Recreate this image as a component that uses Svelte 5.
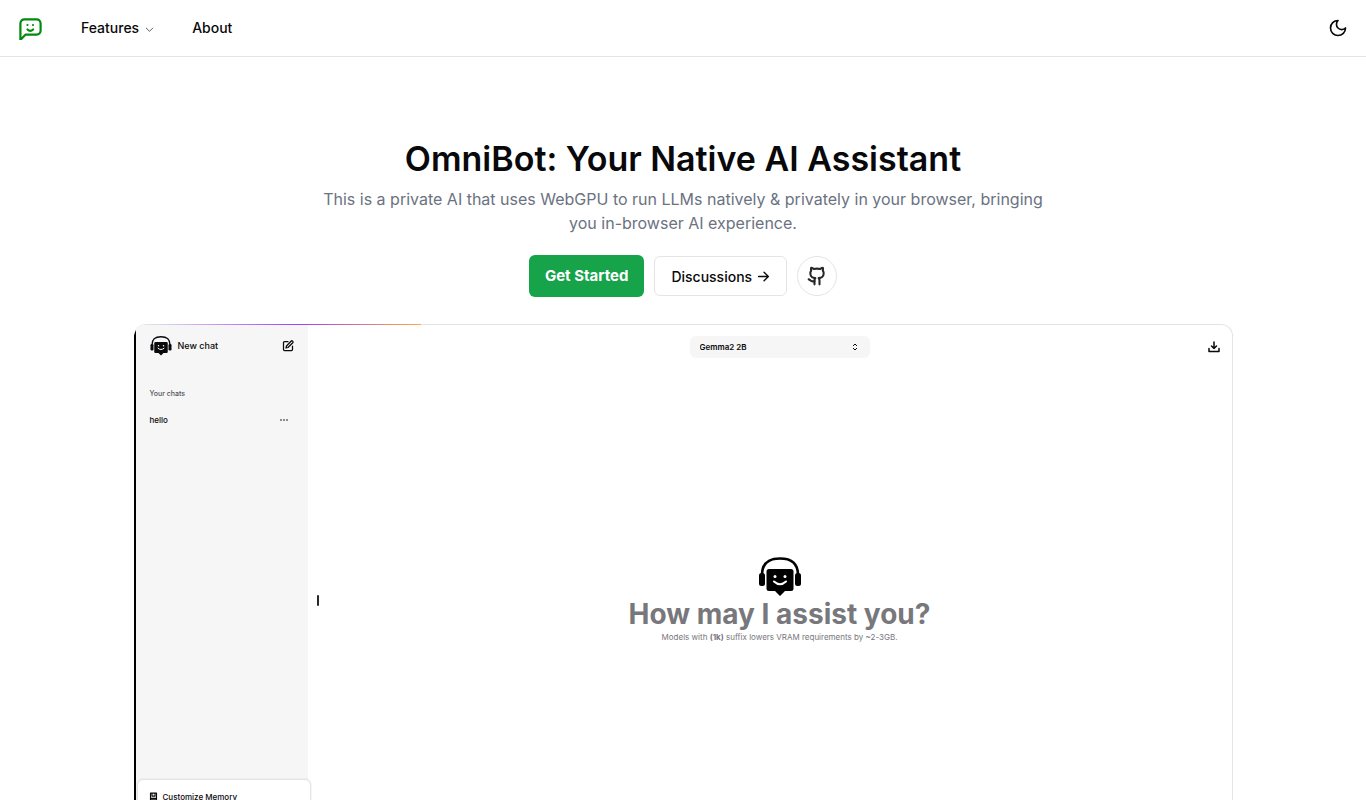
<script>
	let model = $state('Gemma2 2B');
	const models = ['Gemma2 2B', 'Llama 3.2 3B', 'Phi 3.5 Mini'];
	const chats = ['hello'];
</script>

{#snippet robot()}
	<svg class="robot" viewBox="0 0 44 40" aria-hidden="true">
		<path d="M4 18C4 6 11 1.500 22 1.500S40 6 40 18" fill="none" stroke="currentColor" stroke-width="2.600" />
		<rect x="1" y="16" width="6" height="13" rx="2.500" fill="currentColor" />
		<rect x="37" y="16" width="6" height="13" rx="2.500" fill="currentColor" />
		<path
			d="M11 12h22a2.500 2.500 0 0 1 2.500 2.500v17a2.500 2.500 0 0 1-2.500 2.500h-6l-5 5-5-5h-6a2.500 2.500 0 0 1-2.500-2.500v-17a2.500 2.500 0 0 1 2.500-2.500z"
			fill="currentColor"
		/>
		<circle cx="17" cy="19.500" r="1.500" fill="white" />
		<circle cx="27" cy="19.500" r="1.500" fill="white" />
		<path d="M16 24.500q6 5.500 12 0" fill="none" stroke="white" stroke-width="2" stroke-linecap="round" />
	</svg>
{/snippet}

<header>
	<a class="logo" href="/" aria-label="OmniBot home">
		<svg viewBox="0 -2 24 24">
			<path d="M2.400 21.900V5.400a4 4 0 0 1 4-4h12.200a4 4 0 0 1 4 4v7.200a4 4 0 0 1-4 4H7.600z" />
			<path d="M9.500 11.500q2.800 2.600 5.600 0M9.500 7h.01M15 7h.01" />
		</svg>
	</a>
	<nav>
		<button class="nav-item">
			Features
			<svg class="chevron" viewBox="0 0 24 24"><path d="m5 9 7 7 7-7" /></svg>
		</button>
		<a class="nav-item" href="/about">About</a>
	</nav>
	<button class="theme" aria-label="Toggle theme">
		<svg viewBox="0 0 24 24"><path d="M12 3a6 6 0 0 0 9 9 9 9 0 1 1-9-9Z" /></svg>
	</button>
</header>

<main>
	<section class="hero">
		<h1>OmniBot: Your Native AI Assistant</h1>
		<p>
			This is a private AI that uses WebGPU to run LLMs natively & privately in your browser, bringing
			you in-browser AI experience.
		</p>
		<div class="actions">
			<a class="start" href="/chat">Get Started</a>
			<a class="discuss" href="/discussions">
				Discussions
				<svg viewBox="0 0 24 24"><path d="M3 12h18M13 4l8 8-8 8" /></svg>
			</a>
			<a class="github" href="/github" aria-label="GitHub">
				<svg viewBox="0 0 24 24">
					<path d="M15 22v-4a4.800 4.800 0 0 0-1-3.500c3 0 6-2 6-5.500.08-1.250-.27-2.480-1-3.500.28-1.150.28-2.350 0-3.500 0 0-1 0-3 1.500-2.640-.5-5.360-.5-8 0C6 2 5 2 5 2c-.3 1.150-.3 2.350 0 3.500A5.400 5.400 0 0 0 4 9c0 3.500 3 5.500 6 5.500-.39.49-.68 1.050-.85 1.650-.17.6-.22 1.230-.15 1.850v4" />
					<path d="M9 18c-4.510 2-5-2-7-2" />
				</svg>
			</a>
		</div>
	</section>

	<section class="preview">
		<aside>
			<div class="new-chat">
				{@render robot()}
				<span>New chat</span>
				<button aria-label="New chat">
					<svg viewBox="0 0 24 24"><path d="M12 3H5a2 2 0 0 0-2 2v14a2 2 0 0 0 2 2h14a2 2 0 0 0 2-2v-7M18 2.500a2.120 2.120 0 0 1 3.500 3L12 15l-4 1 1-4Z" /></svg>
				</button>
			</div>
			<h2>Your chats</h2>
			<ul>
				{#each chats as chat}
					<li>
						{chat}
						<button aria-label="Chat options">
							<svg class="dots" viewBox="0 0 24 24"><path d="M3 12h.01M12 12h.01M21 12h.01" /></svg>
						</button>
					</li>
				{/each}
			</ul>
			<div class="memory">
				<svg viewBox="0 0 24 24"><path d="M4 3h16v18H4zM8 3v8h8V3M4 17h16" /></svg>
				Customize Memory
			</div>
		</aside>
		<div class="handle"></div>
		<div class="chat">
			<div class="topbar">
				<label class="model">
					<select bind:value={model} aria-label="Model">
						{#each models as name}
							<option>{name}</option>
						{/each}
					</select>
					<svg viewBox="0 0 24 24"><path d="m7 8 5-5 5 5M7 16l5 5 5-5" /></svg>
				</label>
				<button aria-label="Download chat">
					<svg viewBox="0 0 24 24"><path d="M12 2v13M7 10l5 5 5-5M2 15v6h20v-6" /></svg>
				</button>
			</div>
			<div class="welcome">
				{@render robot()}
				<strong>How may I assist you?</strong>
				<small>Models with <b>(1k)</b> suffix lowers VRAM requirements by ~2-3GB.</small>
			</div>
		</div>
		<div class="beam"></div>
	</section>
</main>

<style>
	:global(body) {
		background: white;
		color: #09090b;
		font-family: Inter, 'Liberation Sans', sans-serif;
		font-size: 14px;
	}
	a {
		color: inherit;
		text-decoration: none;
	}
	button {
		display: flex;
		align-items: center;
		padding: 0;
		border: 0;
		background: none;
		color: inherit;
		font: inherit;
		cursor: pointer;
	}
	svg {
		display: block;
		flex: none;
		fill: none;
		stroke: currentColor;
		stroke-width: 2;
		stroke-linecap: round;
		stroke-linejoin: round;
	}
	.robot {
		stroke: none;
	}
	header {
		display: flex;
		align-items: center;
		height: 56px;
		padding: 0 18px;
		border-bottom: 1px solid #e4e4e7;
	}
	.logo {
		color: #008a0e;
	}
	.logo svg {
		width: 24px;
		height: 24px;
		stroke-width: 2.2;
	}
	nav {
		display: flex;
		gap: 5px;
		margin-left: 23px;
	}
	.nav-item {
		display: flex;
		align-items: center;
		gap: 5px;
		height: 36px;
		padding: 0 16px;
		font-weight: 500;
		line-height: 20px;
	}
	.nav-item .chevron {
		width: 11px;
		height: 11px;
		margin-top: 2px;
		color: #52525b;
	}
	.theme {
		margin-left: auto;
	}
	.theme svg {
		width: 20px;
		height: 20px;
	}
	main {
		padding: 78px 16px 48px;
	}
	.hero {
		display: flex;
		flex-direction: column;
		align-items: center;
		text-align: center;
	}
	h1 {
		margin: 0;
		font-size: 34px;
		font-weight: 600;
		line-height: 48px;
	}
	.hero p {
		max-width: 720px;
		margin: 4px 0 20px;
		color: #6b7280;
		font-size: 16px;
		line-height: 24px;
	}
	.actions {
		display: flex;
		align-items: center;
		gap: 10px;
	}
	.start {
		padding: 0 16px;
		border-radius: 6px;
		background: #16a34a;
		color: white;
		font-size: 15px;
		font-weight: 700;
		line-height: 42px;
	}
	.discuss,
	.github {
		display: flex;
		align-items: center;
		justify-content: center;
		gap: 5px;
		box-sizing: border-box;
		height: 40px;
		border: 1px solid #e4e4e7;
	}
	.discuss {
		padding: 0 16px;
		border-radius: 6px;
		font-weight: 500;
	}
	.discuss svg {
		width: 13px;
		height: 13px;
		stroke-width: 2.5;
	}
	.github {
		width: 40px;
		border-radius: 50%;
	}
	.github svg {
		width: 20px;
		height: 20px;
		color: #27272a;
		stroke-width: 2.5;
	}
	.preview {
		position: relative;
		display: grid;
		grid-template-columns: 174px 20px 1fr;
		box-sizing: border-box;
		max-width: 1099px;
		min-height: 552px;
		margin: 27px auto 0;
		border: 1px solid #e4e4e7;
		border-left: 0;
		border-radius: 12px;
	}
	.beam {
		position: absolute;
		top: -1px;
		left: 12px;
		width: 275px;
		height: 1px;
		background: linear-gradient(90deg, transparent, #9c40ff 55%, #ffaa40);
	}
	aside {
		display: flex;
		flex-direction: column;
		padding-left: 2px;
		border-radius: 12px 0 0 12px;
		background: linear-gradient(90deg, black 2px, #f6f6f6 2px);
		font-size: 8px;
		font-weight: 500;
		line-height: 12px;
	}
	.new-chat {
		display: flex;
		align-items: center;
		gap: 6px;
		height: 42px;
		padding: 0 14px;
		font-size: 9px;
	}
	.new-chat .robot {
		width: 22px;
		height: 20px;
	}
	.new-chat button {
		margin-left: auto;
	}
	.new-chat button svg {
		width: 12px;
		height: 12px;
		stroke-width: 2.5;
	}
	h2 {
		margin: 21px 14px 14px;
		color: #52525b;
		font-size: 7px;
		font-weight: 500;
		line-height: 12px;
	}
	ul {
		margin: 0;
		padding: 0 20px 0 14px;
		list-style: none;
	}
	li {
		display: flex;
		align-items: center;
		justify-content: space-between;
	}
	.dots {
		width: 8px;
		height: 8px;
		stroke-width: 5;
	}
	.memory {
		display: flex;
		gap: 5px;
		box-sizing: border-box;
		min-height: 96px;
		margin: auto -3px 0 1px;
		padding: 11px;
		border: 1px solid #e4e4e7;
		border-radius: 6px;
		background: white;
		box-shadow: 0 0 2px #00000020;
	}
	.memory svg {
		width: 9px;
		height: 9px;
		margin-top: 1px;
		stroke-width: 3;
	}
	.handle {
		align-self: center;
		justify-self: center;
		width: 2px;
		height: 11px;
		border-radius: 1px;
		background: #27272a;
	}
	.chat {
		display: grid;
		grid-template-rows: 44px 1fr 44px;
	}
	.topbar {
		display: grid;
		grid-template-columns: 1fr auto 1fr;
		align-items: center;
		padding-right: 12px;
	}
	.topbar button {
		grid-column: 3;
		justify-self: end;
	}
	.topbar button svg {
		width: 12px;
		height: 12px;
		stroke-width: 3;
	}
	.model {
		display: flex;
		grid-column: 2;
		align-items: center;
		width: 180px;
		height: 22px;
		margin-left: 12px;
		border-radius: 6px;
		background: #f6f6f6;
	}
	select {
		flex: 1;
		height: 22px;
		padding: 0 10px;
		border: 0;
		background: none;
		color: inherit;
		font: 600 8px Inter, sans-serif;
		appearance: none;
	}
	.model svg {
		width: 8px;
		height: 8px;
		margin-right: 11px;
		stroke-width: 3;
	}
	.welcome {
		display: flex;
		flex-direction: column;
		align-items: center;
		justify-content: center;
		color: #77777c;
	}
	.welcome .robot {
		width: 44px;
		height: 40px;
		color: black;
	}
	.welcome strong {
		font-size: 28px;
		font-weight: 700;
		line-height: 34px;
	}
	.welcome small {
		font-size: 8px;
		line-height: 12px;
	}
</style>
